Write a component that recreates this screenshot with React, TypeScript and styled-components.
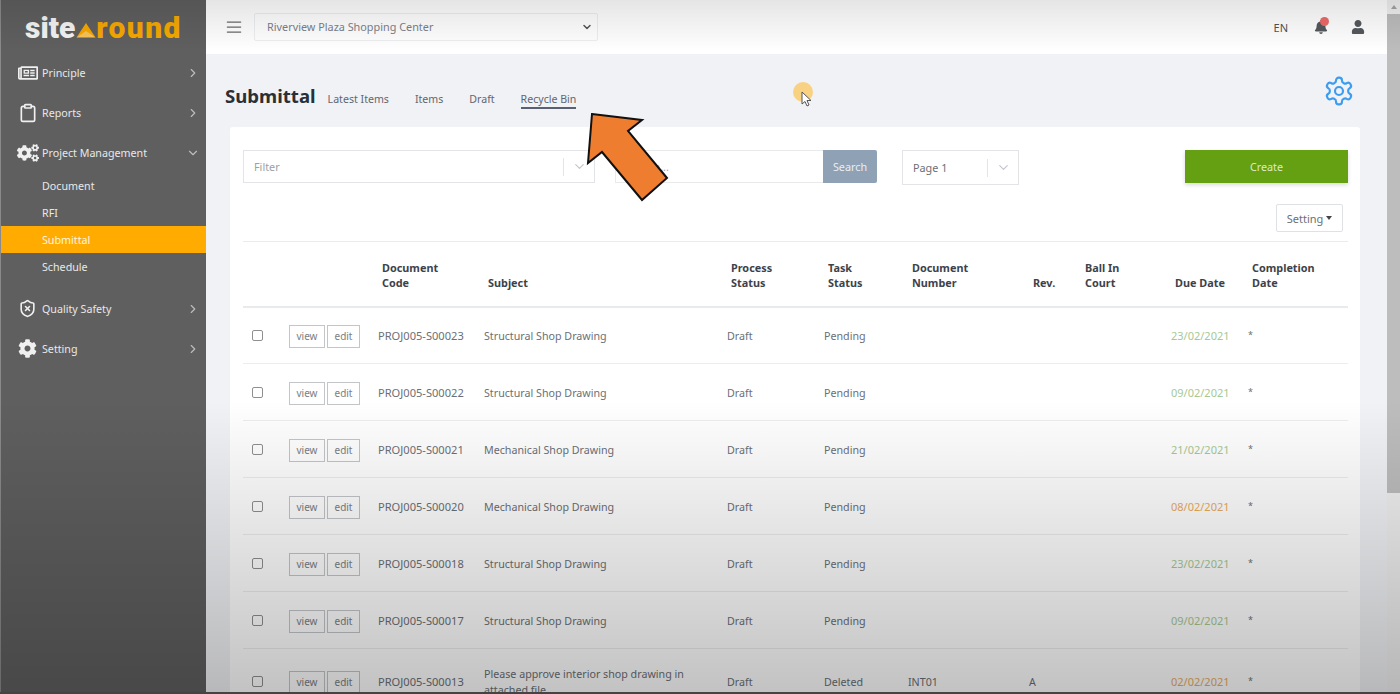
import React from "react";
import styled, { createGlobalStyle } from "styled-components";
import { FaRegNewspaper, FaCogs, FaCog, FaBell, FaUser } from "react-icons/fa";
import { LuClipboard, LuShieldX, LuSettings, LuChevronRight, LuChevronDown, LuMenu } from "react-icons/lu";

const Global = createGlobalStyle`
  html, body { margin: 0; padding: 0; height: 100%; overflow: hidden; }
  body { font-family: "Noto Sans", "Open Sans", sans-serif; font-size: 10.8px; color: #6b6f76; }
  * { box-sizing: border-box; }
`;

const Page = styled.div`
  position: relative;
  display: flex;
  width: 1400px;
  height: 694px;
  overflow: hidden;
  background: #f1f2f5;
`;

const Sidebar = styled.aside`
  flex: 0 0 206px;
  background: #5f5f5f;
  border-left: 1px solid #8a8a8a;
  color: #eeeeee;
  display: flex;
  flex-direction: column;
`;

const Logo = styled.div`
  height: 52px;
  padding: 3px 0 0 24px;
  display: flex;
  align-items: center;
  font-family: "Roboto", "Noto Sans", sans-serif;
  font-weight: 900;
  font-size: 30px;
  line-height: 30px;
  color: #f4f4f4;
`;

const LogoOrange = styled.span`
  color: #f6a800;
  letter-spacing: 1.4px;
`;

const LogoMark = styled.svg`
  width: 20px;
  height: 15px;
  margin: 6px 0 0 1px;
`;

const NavItem = styled.div`
  height: 40px;
  display: flex;
  align-items: center;
  padding: 1px 6px 0 14px;
  font-size: 10.7px;
  color: #e8e8e8;
`;

const NavIcon = styled.span`
  width: 25px;
  display: flex;
  justify-content: center;
  margin-right: 2px;
  font-size: 19px;
  color: #f0f0f0;
`;

const NavLabel = styled.span`
  flex: 1;
`;

const Chevron = styled.span`
  display: flex;
  color: #bcbcbc;
  font-size: 14px;
`;

const SubList = styled.div`
  display: flex;
  flex-direction: column;
  padding-bottom: 8px;
`;

const SubItem = styled.div<{ $active?: boolean }>`
  height: 27px;
  line-height: 28px;
  padding-left: 41px;
  font-size: 10.7px;
  color: ${(p) => (p.$active ? "#fff6e0" : "#e8e8e8")};
  background: ${(p) => (p.$active ? "#ffab00" : "transparent")};
`;

const Main = styled.div`
  flex: 1;
  min-width: 0;
  display: flex;
  flex-direction: column;
`;

const TopBar = styled.header`
  flex: 0 0 54px;
  background: #ffffff;
  display: flex;
  align-items: center;
  padding: 0 22px 0 18px;
  color: #5a5f66;
`;

const Burger = styled.span`
  display: flex;
  font-size: 20px;
  color: #6a6a6a;
  margin-right: 10px;
`;

const ProjectSelect = styled.div`
  width: 344px;
  height: 28px;
  border: 1px solid #eceef0;
  border-radius: 2px;
  display: flex;
  align-items: center;
  justify-content: space-between;
  padding: 0 4px 1px 12px;
  font-size: 10.85px;
  color: #7b818c;
`;

const TopRight = styled.div`
  margin-left: auto;
  display: flex;
  align-items: center;
  color: #4f5358;
`;

const Lang = styled.span`
  font-size: 11px;
  color: #4f5358;
  margin-right: 26px;
`;

const BellWrap = styled.span`
  position: relative;
  display: flex;
  font-size: 14px;
  color: #55585c;
  margin-right: 23px;
`;

const BellDot = styled.i`
  position: absolute;
  top: -3px;
  right: -1px;
  width: 9px;
  height: 9px;
  border-radius: 50%;
  background: #ee6a6a;
`;

const UserIcon = styled.span`
  display: flex;
  font-size: 14px;
  color: #55585c;
`;

const Content = styled.main`
  flex: 1;
  min-height: 0;
  padding: 23px 33px 0 19px;
  display: flex;
  flex-direction: column;
`;

const TitleRow = styled.div`
  height: 50px;
  display: flex;
  align-items: flex-start;
  justify-content: space-between;
`;

const TitleLeft = styled.div`
  display: flex;
  align-items: baseline;
  padding-top: 6px;
`;

const Title = styled.h1`
  margin: 0 12px 0 0;
  font-size: 18.6px;
  line-height: 26px;
  font-weight: 700;
  color: #2b2f36;
`;

const Tab = styled.span<{ $active?: boolean }>`
  font-size: 10.6px;
  color: #5f6670;
  margin-right: 26px;
  padding-bottom: 1px;
  border-bottom: 2px solid ${(p) => (p.$active ? "#5a6072" : "transparent")};
`;

const GearBtn = styled.span`
  display: flex;
  font-size: 32px;
  color: #3b9cf0;
  margin: -2px -1px 0 0;
`;

const Card = styled.section`
  margin-left: 5px;
  margin-right: -6px;
  flex: 1;
  min-height: 0;
  overflow: hidden;
  background: #ffffff;
  border-radius: 3px 3px 0 0;
  padding: 23px 12px 0 13px;
`;

const FilterRow = styled.div`
  display: flex;
  align-items: flex-start;
`;

const SelectBox = styled.div<{ $w: number; $h: number }>`
  width: ${(p) => p.$w}px;
  height: ${(p) => p.$h}px;
  border: 1px solid #e2e4e7;
  display: flex;
  align-items: center;
  padding-left: 10px;
  font-size: 10.8px;
  color: #9aa0a6;
`;

const SelectText = styled.span<{ $dark?: boolean }>`
  flex: 1;
  padding-bottom: 1px;
  color: ${(p) => (p.$dark ? "#6b6f76" : "#9aa0a6")};
`;

const SelectDivider = styled.span`
  width: 1px;
  height: 18px;
  background: #e2e4e7;
`;

const SelectArrow = styled.span`
  width: 30px;
  display: flex;
  justify-content: center;
  font-size: 15px;
  color: #c5c8cc;
`;

const SearchInput = styled.div`
  margin-left: 20px;
  width: 208px;
  height: 33px;
  border: 1px solid #e8eaec;
  border-right: 0;
  display: flex;
  align-items: center;
  padding-left: 10px;
  color: #a0a4a8;
`;

const SearchBtn = styled.div`
  width: 54px;
  height: 33px;
  padding-bottom: 1px;
  background: #8fa1b5;
  color: #e9edf1;
  display: flex;
  align-items: center;
  justify-content: center;
  border-radius: 0 2px 2px 0;
  margin-right: 25px;
`;

const CreateBtn = styled.div`
  margin-left: auto;
  width: 163px;
  height: 33px;
  padding-bottom: 1px;
  background: #64a012;
  color: #dcebc8;
  display: flex;
  align-items: center;
  justify-content: center;
  box-shadow: 0 2px 4px rgba(0, 0, 0, 0.15);
`;

const SettingRow = styled.div`
  display: flex;
  justify-content: flex-end;
  padding: 19px 5px 9px 0;
`;

const SettingBtn = styled.div`
  width: 67px;
  height: 28px;
  border: 1px solid #dfe1e4;
  border-radius: 2px;
  display: flex;
  align-items: center;
  justify-content: center;
  gap: 3px;
  font-size: 11px;
  color: #6b6f76;
`;

const Caret = styled.i`
  width: 0;
  height: 0;
  border-left: 3.5px solid transparent;
  border-right: 3.5px solid transparent;
  border-top: 4px solid #444;
`;

const Table = styled.table`
  width: 1105px;
  table-layout: fixed;
  border-collapse: collapse;
  border-top: 1px solid #eaebed;
`;

const Th = styled.th`
  height: 65px;
  padding: 0 0 16px 4px;
  vertical-align: bottom;
  text-align: left;
  font-size: 10.85px;
  line-height: 15px;
  font-weight: 700;
  color: #3d424a;
  border-bottom: 2px solid #e9eaec;
`;

const Td = styled.td`
  height: 57px;
  padding: 17px 0 15px;
  vertical-align: middle;
  font-size: 10.7px;
  line-height: 16px;
  color: #6b6f76;
  border-bottom: 1px solid #eceded;
`;

const CheckCell = styled(Td)`
  padding-left: 9px;
`;

const Check = styled.span`
  display: block;
  width: 11px;
  height: 11px;
  border: 1px solid #8f8f8f;
  border-radius: 2px;
  background: #fff;
  margin-top: -2px;
`;

const Actions = styled.div`
  display: flex;
  gap: 2px;
  margin: 0 0 0 -1px;
`;

const ActionBtn = styled.span<{ $w: number }>`
  width: ${(p) => p.$w}px;
  height: 23px;
  border: 1px solid #c3c6c9;
  display: flex;
  align-items: center;
  justify-content: center;
  font-size: 10px;
  color: #7a7e84;
`;

const CodeText = styled.span`
  font-size: 11.1px;
`;

const DueDate = styled.span<{ $late?: boolean }>`
  font-size: 11px;
  color: ${(p) => (p.$late ? "#e9ac5f" : "#a6c994")};
`;

const Star = styled.span`
  font-size: 9px;
  position: relative;
  top: -2px;
`;

const Scrollbar = styled.div`
  flex: 0 0 13px;
  background: #f0f0f0;
  display: flex;
  flex-direction: column;
  align-items: stretch;
`;

const ScrollUp = styled.div`
  height: 14px;
  display: flex;
  align-items: center;
  justify-content: center;
`;

const ScrollTri = styled.i`
  width: 0;
  height: 0;
  border-left: 3.5px solid transparent;
  border-right: 3.5px solid transparent;
  border-bottom: 4px solid #a3a3a3;
`;

const ScrollThumb = styled.div`
  height: 479px;
  background: #bdbdbd;
`;

const Shade = styled.div`
  position: absolute;
  inset: 0;
  pointer-events: none;
  background:
    linear-gradient(to bottom, rgba(0, 0, 0, 0.1) 0, rgba(0, 0, 0, 0) 52px),
    linear-gradient(to bottom, rgba(0, 0, 0, 0) 400px, rgba(0, 0, 0, 0.24) 694px);
  border-bottom: 2px solid #444;
`;

const ArrowOverlay = styled.svg`
  position: absolute;
  left: 580px;
  top: 105px;
  width: 100px;
  height: 105px;
`;

const Pointer = styled.svg`
  position: absolute;
  left: 792px;
  top: 82px;
  width: 24px;
  height: 26px;
`;

type Row = { code: string; subject: React.ReactNode; task: string; num?: string; rev?: string; due: string; late?: boolean };

const rows: Row[] = [
  { code: "PROJ005-S00023", subject: "Structural Shop Drawing", task: "Pending", due: "23/02/2021" },
  { code: "PROJ005-S00022", subject: "Structural Shop Drawing", task: "Pending", due: "09/02/2021" },
  { code: "PROJ005-S00021", subject: "Mechanical Shop Drawing", task: "Pending", due: "21/02/2021" },
  { code: "PROJ005-S00020", subject: "Mechanical Shop Drawing", task: "Pending", due: "08/02/2021", late: true },
  { code: "PROJ005-S00018", subject: "Structural Shop Drawing", task: "Pending", due: "23/02/2021" },
  { code: "PROJ005-S00017", subject: "Structural Shop Drawing", task: "Pending", due: "09/02/2021" },
  { code: "PROJ005-S00013", subject: "Please approve interior shop drawing in attached file", task: "Deleted", num: "INT01", rev: "A", due: "02/02/2021", late: true },
];

const cols = [47, 88, 106, 243, 97, 84, 121, 52, 90, 77, 100];

export default function App() {
  return (
    <Page>
      <Global />
      <Sidebar>
        <Logo>
          site
          <LogoMark viewBox="0 0 20 15">
            <path d="M10 0 L19.5 14.5 L10 10.5 L0.5 14.5 Z" fill="#f6a800" />
            <path d="M0.5 14.5 L10 8 L19.5 14.5 Z" fill="#f8c45a" />
          </LogoMark>
          <LogoOrange>round</LogoOrange>
        </Logo>
        <NavItem>
          <NavIcon><FaRegNewspaper size={20} /></NavIcon>
          <NavLabel>Principle</NavLabel>
          <Chevron><LuChevronRight /></Chevron>
        </NavItem>
        <NavItem>
          <NavIcon><LuClipboard size={20} /></NavIcon>
          <NavLabel>Reports</NavLabel>
          <Chevron><LuChevronRight /></Chevron>
        </NavItem>
        <NavItem>
          <NavIcon><FaCogs size={22} /></NavIcon>
          <NavLabel>Project Management</NavLabel>
          <Chevron><LuChevronDown /></Chevron>
        </NavItem>
        <SubList>
          <SubItem>Document</SubItem>
          <SubItem>RFI</SubItem>
          <SubItem $active>Submittal</SubItem>
          <SubItem>Schedule</SubItem>
        </SubList>
        <NavItem>
          <NavIcon><LuShieldX /></NavIcon>
          <NavLabel>Quality Safety</NavLabel>
          <Chevron><LuChevronRight /></Chevron>
        </NavItem>
        <NavItem>
          <NavIcon><FaCog /></NavIcon>
          <NavLabel>Setting</NavLabel>
          <Chevron><LuChevronRight /></Chevron>
        </NavItem>
      </Sidebar>
      <Main>
        <TopBar>
          <Burger><LuMenu strokeWidth={1.5} /></Burger>
          <ProjectSelect>
            Riverview Plaza Shopping Center
            <LuChevronDown size={12} color="#555" strokeWidth={3} />
          </ProjectSelect>
          <TopRight>
            <Lang>EN</Lang>
            <BellWrap><FaBell /><BellDot /></BellWrap>
            <UserIcon><FaUser /></UserIcon>
          </TopRight>
        </TopBar>
        <Content>
          <TitleRow>
            <TitleLeft>
              <Title>Submittal</Title>
              <Tab>Latest Items</Tab>
              <Tab>Items</Tab>
              <Tab>Draft</Tab>
              <Tab $active>Recycle Bin</Tab>
            </TitleLeft>
            <GearBtn><LuSettings strokeWidth={1.6} /></GearBtn>
          </TitleRow>
          <Card>
            <FilterRow>
              <SelectBox $w={352} $h={33}>
                <SelectText>Filter</SelectText>
                <SelectDivider />
                <SelectArrow><LuChevronDown /></SelectArrow>
              </SelectBox>
              <SearchInput>Search...</SearchInput>
              <SearchBtn>Search</SearchBtn>
              <SelectBox $w={117} $h={35}>
                <SelectText $dark>Page 1</SelectText>
                <SelectDivider />
                <SelectArrow><LuChevronDown /></SelectArrow>
              </SelectBox>
              <CreateBtn>Create</CreateBtn>
            </FilterRow>
            <SettingRow>
              <SettingBtn>Setting <Caret /></SettingBtn>
            </SettingRow>
            <Table>
              <colgroup>
                {cols.map((w, i) => <col key={i} width={w} />)}
              </colgroup>
              <thead>
                <tr>
                  <Th />
                  <Th />
                  <Th>Document<br />Code</Th>
                  <Th>Subject</Th>
                  <Th>Process<br />Status</Th>
                  <Th>Task<br />Status</Th>
                  <Th>Document<br />Number</Th>
                  <Th>Rev.</Th>
                  <Th>Ball In<br />Court</Th>
                  <Th>Due Date</Th>
                  <Th>Completion<br />Date</Th>
                </tr>
              </thead>
              <tbody>
                {rows.map((r) => (
                  <tr key={r.code}>
                    <CheckCell><Check /></CheckCell>
                    <Td>
                      <Actions>
                        <ActionBtn $w={36}>view</ActionBtn>
                        <ActionBtn $w={33}>edit</ActionBtn>
                      </Actions>
                    </Td>
                    <Td><CodeText>{r.code}</CodeText></Td>
                    <Td>{r.subject}</Td>
                    <Td>Draft</Td>
                    <Td>{r.task}</Td>
                    <Td>{r.num}</Td>
                    <Td>{r.rev}</Td>
                    <Td />
                    <Td><DueDate $late={r.late}>{r.due}</DueDate></Td>
                    <Td><Star>*</Star></Td>
                  </tr>
                ))}
              </tbody>
            </Table>
          </Card>
        </Content>
      </Main>
      <Scrollbar>
        <ScrollUp><ScrollTri /></ScrollUp>
        <ScrollThumb />
      </Scrollbar>
      <ArrowOverlay viewBox="0 0 100 105">
        <polygon
          points="12,9 62,15 48,26 87,73 62,95 22,47 8,58"
          fill="#ef7d2f"
          stroke="#111"
          strokeWidth="2"
          strokeLinejoin="miter"
        />
      </ArrowOverlay>
      <Pointer viewBox="0 0 24 26">
        <circle cx="11" cy="10" r="10" fill="#f9d183" />
        <path d="M10 10 L10 22 L13 19.5 L15 24 L17 23 L15 18.5 L19 18.5 Z" fill="#fff" stroke="#555" strokeWidth="1" />
      </Pointer>
      <Shade />
    </Page>
  );
}
